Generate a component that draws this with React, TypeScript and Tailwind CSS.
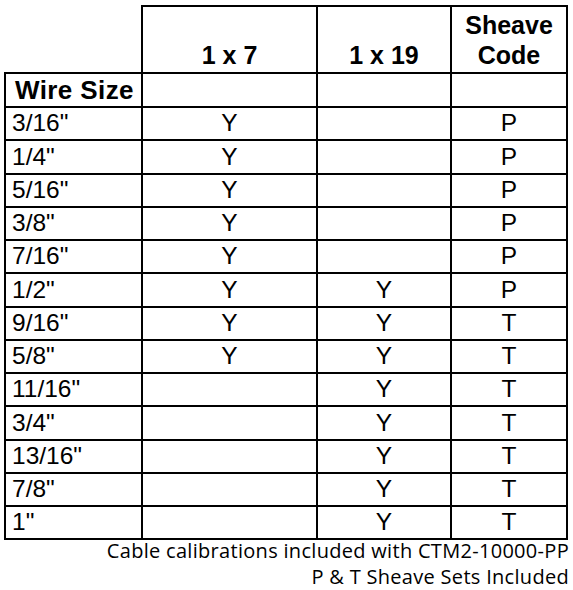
const rows: [string, string, string, string][] = [
  ['3/16"', "Y", "", "P"],
  ['1/4"', "Y", "", "P"],
  ['5/16"', "Y", "", "P"],
  ['3/8"', "Y", "", "P"],
  ['7/16"', "Y", "", "P"],
  ['1/2"', "Y", "Y", "P"],
  ['9/16"', "Y", "Y", "T"],
  ['5/8"', "Y", "Y", "T"],
  ['11/16"', "", "Y", "T"],
  ['3/4"', "", "Y", "T"],
  ['13/16"', "", "Y", "T"],
  ['7/8"', "", "Y", "T"],
  ['1"', "", "Y", "T"],
];

const cell = "border-2 border-black p-0";

export default function App() {
  return (
    <div className="w-[573px] h-[590px] bg-white text-black font-['Liberation_Sans',Arial,sans-serif] overflow-hidden">
      <table className="ml-[4px] mt-[5px] border-collapse table-fixed w-[564px]">
        <colgroup>
          <col className="w-[137px]" />
          <col className="w-[175px]" />
          <col className="w-[134px]" />
          <col className="w-[116px]" />
        </colgroup>
        <thead>
          <tr className="h-[67px]">
            <th className="p-0 border-0" />
            <th className={`${cell} align-bottom text-center text-[25px] font-bold leading-[30px] pb-[2px]`}>1 x 7</th>
            <th className={`${cell} align-bottom text-center text-[25px] font-bold leading-[30px] pb-[2px]`}>1 x 19</th>
            <th className={`${cell} align-bottom text-center text-[25px] font-bold leading-[30px] pb-[2px]`}>
              Sheave
              <br />
              Code
            </th>
          </tr>
          <tr className="h-[34px]">
            <th className={`${cell} text-left pl-[9px] text-[26px] tracking-[0.4px] font-bold leading-none`}>Wire Size</th>
            <th className={cell} />
            <th className={cell} />
            <th className={cell} />
          </tr>
        </thead>
        <tbody className="text-[24.5px] leading-none">
          {rows.map(([size, a, b, code]) => (
            <tr key={size} className="h-[33.25px]">
              <td className={`${cell} pl-[6px]`}>{size}</td>
              <td className={`${cell} text-center`}>{a}</td>
              <td className={`${cell} text-center`}>{b}</td>
              <td className={`${cell} text-center`}>{code}</td>
            </tr>
          ))}
        </tbody>
      </table>
      <div className="-mt-[2px] pr-[4px] text-right font-['Open_Sans',sans-serif] text-[20px] leading-[26px] tracking-[0.3px]">
        <div>Cable calibrations included with CTM2-10000-PP</div>
        <div>P &amp; T Sheave Sets Included</div>
      </div>
    </div>
  );
}
